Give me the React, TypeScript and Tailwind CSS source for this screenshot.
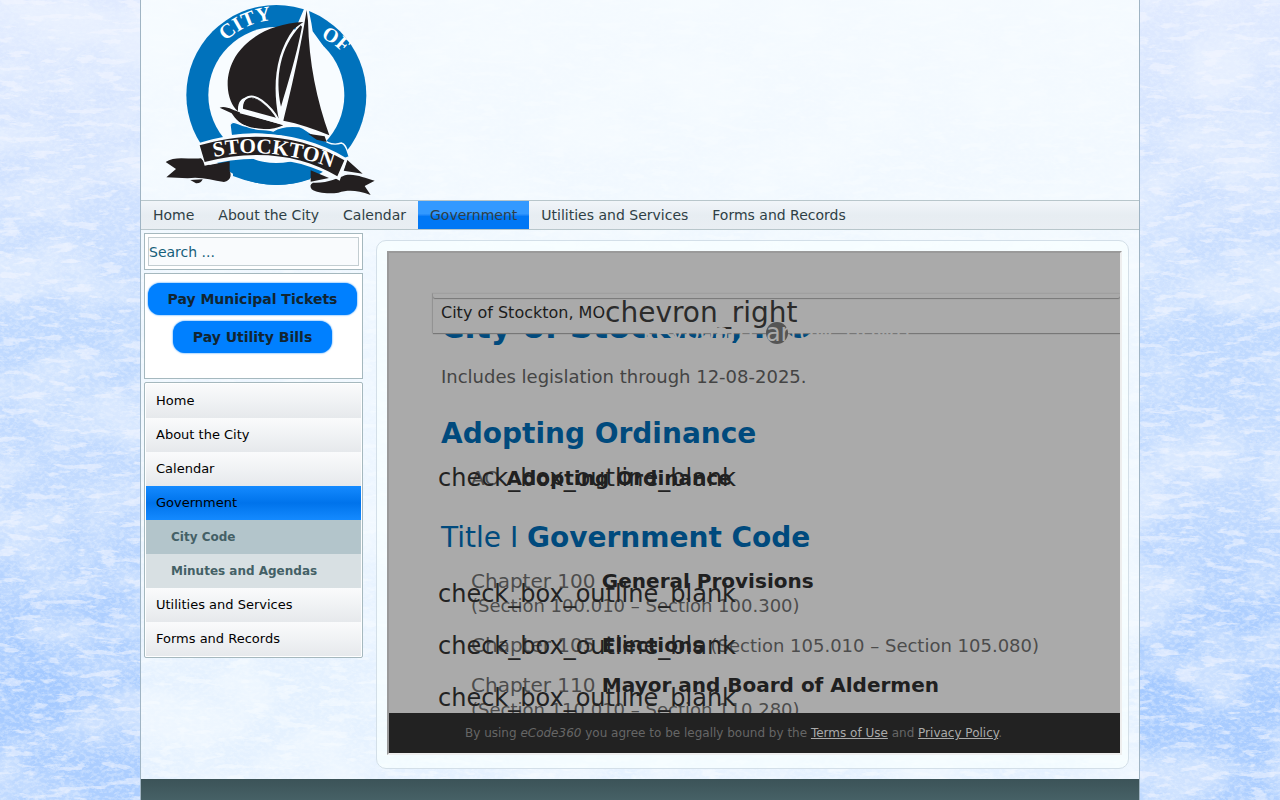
import React from 'react';
import clsx from 'clsx';

interface NavItem {
    label: string;
    active?: boolean;
    children?: { label: string; current?: boolean }[];
}

interface CodeEntry {
    id: string;
    name: string;
    range?: string;
}

const NAV_ITEMS: NavItem[] = [
    { label: 'Home' },
    { label: 'About the City' },
    { label: 'Calendar' },
    {
        label: 'Government',
        active: true,
        children: [{ label: 'City Code', current: true }, { label: 'Minutes and Agendas' }],
    },
    { label: 'Utilities and Services' },
    { label: 'Forms and Records' },
];

const ORDINANCES: CodeEntry[] = [{ id: 'AO', name: 'Adopting Ordinance' }];

const CHAPTERS: CodeEntry[] = [
    { id: 'Chapter 100', name: 'General Provisions', range: '(Section 100.010 – Section 100.300)' },
    { id: 'Chapter 105', name: 'Elections', range: '(Section 105.010 – Section 105.080)' },
    { id: 'Chapter 110', name: 'Mayor and Board of Aldermen', range: '(Section 110.010 – Section 110.280)' },
];

// Scratched ice texture behind the whole sheet
const IceBackground: React.FC = () => (
    <svg className="absolute inset-0 h-full w-full" aria-hidden="true">
        <defs>
            <linearGradient id="ice" x1="0" y1="0" x2="0" y2="1">
                <stop offset="0" stopColor="#e0eaff" />
                <stop offset="0.25" stopColor="#cfe1ff" />
                <stop offset="0.42" stopColor="#bfd9ff" />
                <stop offset="0.62" stopColor="#c3dbff" />
                <stop offset="0.84" stopColor="#a4c9ff" />
                <stop offset="1" stopColor="#aecfff" />
            </linearGradient>
            <filter id="clouds" x="0" y="0" width="100%" height="100%" colorInterpolationFilters="sRGB">
                <feTurbulence type="fractalNoise" baseFrequency="0.011 0.016" numOctaves="7" seed="8" />
                <feColorMatrix values="0 0 0 0 0.95  0 0 0 0 0.97  0 0 0 0 1  3.4 0 0 0 -1.4" />
            </filter>
            <filter id="grain" x="0" y="0" width="100%" height="100%" colorInterpolationFilters="sRGB">
                <feTurbulence type="fractalNoise" baseFrequency="0.2 0.3" numOctaves="4" seed="21" />
                <feColorMatrix values="0 0 0 0 0.93  0 0 0 0 0.96  0 0 0 0 1  4 0 0 0 -1.7" />
            </filter>
            <filter id="scratches" x="0" y="0" width="100%" height="100%" colorInterpolationFilters="sRGB">
                <feTurbulence type="fractalNoise" baseFrequency="0.04 0.14" numOctaves="5" seed="5" />
                <feColorMatrix values="0 0 0 0 0.96  0 0 0 0 0.97  0 0 0 0 1  9 0 0 0 -5.2" />
            </filter>
        </defs>
        <rect width="100%" height="100%" fill="url(#ice)" />
        <rect width="100%" height="100%" filter="url(#clouds)" opacity="0.5" />
        <rect width="100%" height="100%" filter="url(#grain)" opacity="0.35" />
        <rect width="100%" height="100%" filter="url(#scratches)" opacity="0.5" />
    </svg>
);

const Logo: React.FC = () => (
    <svg viewBox="3 0 780 600" className="block h-[200px] w-[260px]" role="img" aria-label="City of Stockton">
        <defs>
            <path id="arc-city" d="M 257 124 A 226 226 0 0 1 430 60" />
            <path id="arc-of" d="M 542 112 A 220 220 0 0 1 660 240" />
            <path id="arc-stockton" d="M 222 471 Q 400 432 620 520" />
        </defs>
        {/* ring */}
        <circle cx="409" cy="285" r="270" fill="#0072bc" />
        <circle cx="409" cy="285" r="204" fill="#f8fcff" />
        <path d="M470 78 L492 27 L503 14 L514 68 L518 94 L550 138 L440 150Z" fill="#f8fcff" />
        {/* water under the banner */}
        <path d="M279 478 L330 482 C360 500 385 486 425 492 C460 487 480 500 510 506 V538 Q400 576 279 528Z" fill="#0072bc" />
        {/* sails */}
        <path d="M490 66 C360 72 262 150 263 255 C264 292 276 318 294 334 C292 300 310 289 330 293 C365 300 395 330 416 356 C397 260 405 160 462 86Z" fill="#231f20" />
        <path d="M482 76 C420 142 404 234 423 320 C442 254 468 174 486 80Z" fill="#231f20" />
        <path d="M500 30 L504 62 C507 190 530 300 568 406 C522 386 476 371 430 362 C448 290 474 180 492 78Z" fill="#231f20" />
        {/* jib and hull */}
        <path d="M320 294 C349 288 391 322 411 354 L309 326 C308 313 313 302 320 294Z" fill="#231f20" />
        <path d="M239 323 C258 315 280 332 304 338 L430 376 C404 389 378 389 343 386 C302 379 284 353 275 340Z" fill="#231f20" />
        <path d="M304 330 C302 286 337 281 365 302 C385 317 403 337 414 358 M300 337 L432 372" fill="none" stroke="#f8fcff" strokeWidth="6" />
        {/* waves */}
        <path d="M270 374 C280 357 297 376 316 378 C351 393 377 386 400 393 C424 377 459 378 478 380 C502 388 508 405 541 410 C562 432 581 437 604 429 C620 433 620 452 628 470 L600 482 C500 414 385 390 274 407Z" fill="#0072bc" stroke="#f8fcff" strokeWidth="4" />
        <path d="M504 401 L554 409 L560 426 L530 419Z" fill="#231f20" />
        {/* ribbon tails */}
        <path d="M77 486 C104 466 147 479 183 475 C202 502 231 499 263 505 C278 520 274 543 252 546 C214 540 180 529 143 535 L79 532 L108 507Z" fill="#231f20" />
        <path d="M151 540 L188 538 Q183 551 168 550Z" fill="#231f20" />
        <path d="M203 496 L269 484 V513Z M512 511 L567 534 L512 545Z M622 480 L668 521 L611 512Z" fill="#231f20" />
        <path d="M519 548 C565 550 591 535 615 526 C648 520 672 535 704 542 L674 558 L692 585 C650 570 625 569 595 578 C570 582 530 580 515 568 Q506 554 519 548Z" fill="#231f20" />
        {/* banner */}
        <path d="M174 430 C327 381 490 394 622 476 L599 542 C486 472 345 460 194 497Z" fill="#f8fcff" />
        <path d="M179 436 C327 391 483 403 613 481 L592 529 C487 464 345 446 194 486Z" fill="#231f20" />
        <g fill="#fff" className="[font-family:'Liberation_Serif',serif]" fontWeight="700">
            <text fontSize="62"><textPath href="#arc-city">CITY</textPath></text>
            <text fontSize="60"><textPath href="#arc-of">OF</textPath></text>
            <text fontSize="64"><textPath href="#arc-stockton">STOCKTON</textPath></text>
        </g>
    </svg>
);

const TopNav: React.FC = () => (
    <nav className="flex h-[30px] border-y border-[#b8c6cb] bg-linear-to-b from-[#f1f5f9] via-[#e7edf2] to-[#e9eef3]">
        {NAV_ITEMS.map((item) => (
            <a
                key={item.label}
                href="#"
                className={clsx(
                    'px-3 text-sm leading-7 text-[#2f3f45]',
                    item.active && 'bg-linear-to-b from-[#3399ff] from-45% to-[#0077f5] to-55%',
                )}
            >
                {item.label}
            </a>
        ))}
    </nav>
);

const SideMenu: React.FC = () => (
    <ul className="rounded-xs border border-[#a5b8be] bg-white p-px text-[13px] leading-[34px] text-black">
        {NAV_ITEMS.map((item) => (
            <li key={item.label}>
                <a
                    href="#"
                    className={clsx(
                        'block px-2.5',
                        item.active
                            ? 'bg-linear-to-b from-[#148aff] via-[#0073eb] to-[#148aff]'
                            : 'bg-linear-to-b from-[#fafbfc] to-[#e6e9ec]',
                    )}
                >
                    {item.label}
                </a>
                {item.children && (
                    <ul className="text-xs leading-[34px] font-bold text-[#446066]">
                        {item.children.map((child) => (
                            <li key={child.label}>
                                <a href="#" className={clsx('block pl-[25px]', child.current ? 'bg-[#b3c5cb]' : 'bg-[#d8e0e3]')}>
                                    {child.label}
                                </a>
                            </li>
                        ))}
                    </ul>
                )}
            </li>
        ))}
    </ul>
);

const Sidebar: React.FC = () => (
    <aside className="flex w-[219px] shrink-0 flex-col gap-[3px]">
        <form className="border border-[#a5b8be] bg-white p-[3px]">
            <input
                type="search"
                aria-label="Search"
                placeholder="Search ..."
                className="block h-[29px] w-full border border-[#c3cdd1] bg-[#f9fbfd] text-sm text-[#17607a] outline-none placeholder:text-[#17607a] placeholder:opacity-100"
            />
        </form>
        <div className="flex h-[106px] flex-col items-center gap-1.5 border border-[#a5b8be] bg-white pt-[9px] pr-0.5 text-sm font-bold text-[#122531]">
            <button type="button" className="h-8 rounded-xl bg-[#0080ff] px-5 shadow-[0_0_2px_#0080ff]">Pay Municipal Tickets</button>
            <button type="button" className="h-8 rounded-xl bg-[#0080ff] px-5 shadow-[0_0_2px_#0080ff]">Pay Utility Bills</button>
        </div>
        <SideMenu />
    </aside>
);

const EntryList: React.FC<{ entries: CodeEntry[] }> = ({ entries }) => (
    <ul className="flex flex-col gap-[15px]">
        {entries.map((entry) => (
            <li key={entry.id} className="relative pl-[30px] text-xl leading-6 text-[#4c4c4c]">
                {entry.id} <b className="text-[#202020]">{entry.name}</b>{' '}
                {entry.range && <span className="inline-block text-lg leading-6 whitespace-nowrap">{entry.range}</span>}
                <span className="absolute top-1/2 left-[-3px] -translate-y-1/2 text-2xl text-[#222]">check_box_outline_blank</span>
            </li>
        ))}
    </ul>
);

const CodeFrame: React.FC = () => (
    <section className="relative flex h-[504px] flex-col overflow-hidden border-2 border-t-[#9a9a9a] border-r-[#eee] border-b-[#eee] border-l-[#9a9a9a] bg-[#aaa]">
        <div className="min-h-0 flex-1 overflow-hidden pt-[54px] pr-2 pl-[52px]">
            <h1 className="text-[32px] leading-10 font-bold text-[#004a7d]">City of Stockton, MO</h1>
            <p className="mt-4 text-lg leading-7 text-[#444]">Includes legislation through 12-08-2025.</p>
            <h2 className="mt-[25px] mb-3.5 text-[28px] leading-9 font-bold text-[#004a7d]">Adopting Ordinance</h2>
            <EntryList entries={ORDINANCES} />
            <h2 className="mt-[30px] mb-[13px] text-[28px] leading-9 text-[#004a7d]">
                Title I <b>Government Code</b>
            </h2>
            <EntryList entries={CHAPTERS} />
        </div>
        {/* breadcrumb bar floats over the scrolled text */}
        <div className="absolute top-10 right-0 left-11 bg-[#aaa] shadow-[0_1px_1px_#777,-1px_0_1px_#999]">
            <div className="h-[5px] rounded-b-xs border-t border-[#a0a0a0] shadow-[0_1px_1px_#777]" />
            <div className="flex h-[35px] items-center pb-[5px] pl-2 whitespace-nowrap">
                <a href="#" className="text-base text-[#1c1c1c]">City of Stockton, MO</a>
                <span className="text-[28px] text-[#2b2b2b]">chevron_right</span>
            </div>
            <button
                type="button"
                className="absolute top-full left-1/2 flex size-[22px] -translate-x-1/2 -translate-y-1/2 items-center justify-center rounded-full bg-[#555] text-2xl text-[#aaa]"
            >
                <span>keyboard_arrow_down</span>
            </button>
        </div>
        <footer className="relative h-10 bg-[#222] pl-[76px] text-xs leading-10 text-[#666]">
            By using <i>eCode360</i> you agree to be legally bound by the{' '}
            <a href="#" className="text-[#aaa] underline">Terms of Use</a> and{' '}
            <a href="#" className="text-[#aaa] underline">Privacy Policy</a>.
        </footer>
    </section>
);

export default function App() {
    return (
        <div className="relative flex min-h-screen flex-col overflow-hidden bg-[#c5dcff] [font-family:'DejaVu_Sans',sans-serif]">
            <IceBackground />
            <div className="relative mx-auto flex w-full max-w-[1000px] flex-1 flex-col border-x border-[#9fb4c4] bg-linear-to-b from-[#f8fdff]/85 to-[#f8fdff]/75">
                <header>
                    <Logo />
                </header>
                <TopNav />
                <div className="flex gap-[13px] pt-[3px] pl-[3px]">
                    <Sidebar />
                    <main className="mt-[7px] mr-2.5 mb-2.5 min-w-0 flex-1 rounded-[10px] border border-[#d3dfe8] bg-[#f8ffff]/70 pt-2.5 pr-1.5 pb-[13px] pl-2.5">
                        <CodeFrame />
                    </main>
                </div>
                <footer className="min-h-[21px] flex-1 bg-linear-to-b from-[#3c5358] to-[#466166]" />
            </div>
        </div>
    );
}
